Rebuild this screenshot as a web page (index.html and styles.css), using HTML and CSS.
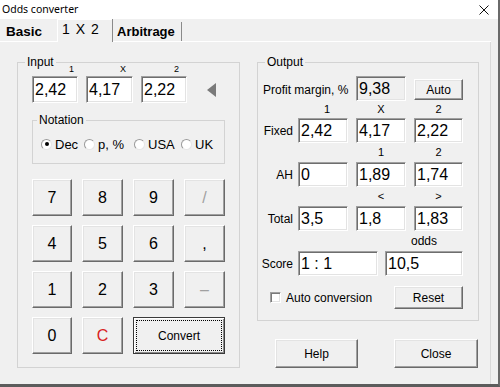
FILE: index.html
```html
<!DOCTYPE html>
<html lang="en">
<head>
<meta charset="utf-8">
<title>Odds converter</title>
<link rel="stylesheet" href="styles.css">
</head>
<body>
<div class="window">
  <div class="titlebar">
    <span class="title">Odds converter</span>
    <svg class="close-x" width="10" height="10" viewBox="0 0 10 10"><path d="M0.5 0.5 L9.5 9.5 M9.5 0.5 L0.5 9.5" stroke="#111" stroke-width="1" fill="none"/></svg>
  </div>
  <div class="tabs">
    <div class="tab tab-basic">Basic</div>
    <div class="tab tab-active">1 X 2</div>
    <div class="tab tab-arb">Arbitrage</div>
  </div>
  <div class="page">
    <div class="group input-group">
      <span class="legend">Input</span>
      <div class="odds-heads"><span>1</span><span>X</span><span>2</span></div>
      <div class="odds-row">
        <div class="edit big">2,42</div>
        <div class="edit big">4,17</div>
        <div class="edit big">2,22</div>
        <svg class="arrow" width="9" height="14" viewBox="0 0 9 14"><polygon points="9,0 9,14 0,7" fill="#7a7a7a"/></svg>
      </div>
      <div class="group notation">
        <span class="legend legend-notation">Notation</span>
        <div class="radios">
          <div class="radio-item ri-dec"><span class="radio checked"></span><span>Dec</span></div>
          <div class="radio-item ri-p"><span class="radio"></span><span>p, %</span></div>
          <div class="radio-item ri-usa"><span class="radio"></span><span>USA</span></div>
          <div class="radio-item ri-uk"><span class="radio"></span><span>UK</span></div>
        </div>
      </div>
      <div class="keypad">
        <div class="btn key">7</div>
        <div class="btn key">8</div>
        <div class="btn key">9</div>
        <div class="btn key disabled">/</div>
        <div class="btn key">4</div>
        <div class="btn key">5</div>
        <div class="btn key">6</div>
        <div class="btn key">,</div>
        <div class="btn key">1</div>
        <div class="btn key">2</div>
        <div class="btn key">3</div>
        <div class="btn key disabled">–</div>
        <div class="btn key">0</div>
        <div class="btn key key-c">C</div>
        <div class="btn convert">Convert</div>
      </div>
    </div>
    <div class="right-col">
      <div class="group output-group">
        <span class="legend">Output</span>
        <div class="out-grid">
          <div class="lbl profit-lbl">Profit margin, %</div>
          <div class="edit readonly c3">9,38</div>
          <div class="btn auto">Auto</div>

          <div class="head h-c2 h-first">1</div>
          <div class="head h-c3">X</div>
          <div class="head h-c4">2</div>

          <div class="lbl row-lbl">Fixed</div>
          <div class="edit c2">2,42</div>
          <div class="edit c3">4,17</div>
          <div class="edit c4">2,22</div>

          <div class="head h-c3">1</div>
          <div class="head h-c4">2</div>

          <div class="lbl row-lbl">AH</div>
          <div class="edit c2">0</div>
          <div class="edit c3">1,89</div>
          <div class="edit c4">1,74</div>

          <div class="head h-c3">&lt;</div>
          <div class="head h-c4">&gt;</div>

          <div class="lbl row-lbl">Total</div>
          <div class="edit c2">3,5</div>
          <div class="edit c3">1,8</div>
          <div class="edit c4">1,83</div>

          <div class="head h-odds">odds</div>

          <div class="lbl row-lbl">Score</div>
          <div class="score-pair">
            <div class="edit score">1 : 1</div>
            <div class="edit odds">10,5</div>
          </div>
        </div>
        <div class="auto-row">
          <label class="check-wrap"><span class="check"></span><span>Auto conversion</span></label>
          <div class="btn reset">Reset</div>
        </div>
      </div>
      <div class="bottom-buttons">
        <div class="btn big-btn">Help</div>
        <div class="btn big-btn close-btn">Close</div>
      </div>
    </div>
  </div>
</div>
</body>
</html>
```
FILE: styles.css
```css
* { box-sizing: border-box; margin: 0; padding: 0; }
html, body { width: 500px; height: 387px; overflow: hidden; }
body {
  background: #f0f0f0;
  font-family: "Liberation Sans", Arial, sans-serif;
  color: #000;
}
.window {
  width: 500px;
  height: 387px;
  display: flex;
  flex-direction: column;
  border-right: 2px solid #6a6a6a;
  border-bottom: 3px solid #5c5c5c;
}
.titlebar {
  height: 19px;
  flex: none;
  background: #fff;
  display: flex;
  align-items: center;
  justify-content: space-between;
  padding-left: 2px;
  padding-right: 9px;
}
.title {
  font-family: "Noto Sans", sans-serif;
  font-size: 10.5px;
  line-height: 19px;
  color: #000;
}
.close-x { display: block; }

.tabs {
  height: 23px;
  flex: none;
  display: flex;
  align-items: flex-end;
  box-shadow: inset 0 -1px 0 #fff;
  width: 491px;
}
.tab {
  height: 20px;
  line-height: 20px;
  font-size: 13.5px;
  white-space: nowrap;
}
.tab-basic {
  width: 57px;
  padding-left: 6px;
  font-weight: bold;
}
.tab-active {
  width: 56px;
  height: 23px;
  padding-left: 5px;
  padding-bottom: 3px;
  font-size: 14px;
  word-spacing: 2px;
  background: #f0f0f0;
  border-right: 1px solid #8a8a8a;
  box-shadow: inset 1px 1px 0 #fff;
}
.tab-arb {
  width: 69px;
  padding-left: 4px;
  font-size: 13px;
  font-weight: bold;
  border-right: 1px solid #8a8a8a;
  height: 19px;
  margin-bottom: 1px;
}

.page {
  flex: 1;
  width: 491px;
  border-right: 1px solid #dadada;
  display: flex;
  align-items: flex-start;
  padding: 20px 0 0 17px;
}

.group {
  position: relative;
  border: 1px solid #d3d3d3;
}
.legend {
  position: absolute;
  top: -8px;
  left: 7px;
  padding: 0 2px;
  background: #f0f0f0;
  font-size: 12px;
  line-height: 14px;
  white-space: nowrap;
}
.legend-notation { left: 4px; }

/* Input group */
.input-group {
  width: 223px;
  height: 306px;
  padding-left: 14px;
  flex: none;
}
.odds-heads {
  height: 13px;
  display: grid;
  grid-template-columns: 46px 47px 46px;
  column-gap: 8px;
  font-size: 9px;
  line-height: 13px;
  text-align: right;
}
.odds-heads span:nth-child(1) { padding-right: 4px; }
.odds-heads span:nth-child(2) { padding-right: 7px; }
.odds-heads span:nth-child(3) { padding-right: 8px; }
.odds-row {
  display: grid;
  grid-template-columns: 46px 47px 46px 9px;
  column-gap: 8px;
  align-items: center;
}
.odds-row .arrow { margin-left: 12px; display: block; }

.edit {
  height: 25px;
  background: #fff;
  border: 1px solid;
  border-color: #a0a0a0 #fff #fff #a0a0a0;
  box-shadow: inset 1px 1px 0 #6e6e6e, inset -1px -1px 0 #e3e3e3;
  font-size: 16px;
  line-height: 1;
  padding-left: 2px;
  display: flex;
  align-items: center;
  white-space: nowrap;
  overflow: hidden;
}
.edit.big { height: 27px; }
.edit.readonly { background: #f0f0f0; }

.notation {
  margin-top: 17px;
  width: 193px;
  height: 44px;
  padding: 16px 0 0 8px;
}
.radios {
  display: flex;
  align-items: center;
  height: 14px;
  font-size: 13px;
}
.radio-item {
  display: flex;
  align-items: center;
  gap: 3px;
  flex: none;
}
.ri-dec { width: 43px; }
.ri-p { width: 50px; }
.ri-usa { width: 47px; }
.radio {
  width: 11px;
  height: 11px;
  border-radius: 50%;
  background: #fff;
  border: 1px solid;
  border-color: #9a9a9a #e6e6e6 #e6e6e6 #9a9a9a;
  position: relative;
  flex: none;
}
.radio.checked::after {
  content: "";
  position: absolute;
  left: 2.5px;
  top: 2.5px;
  width: 4px;
  height: 4px;
  border-radius: 50%;
  background: #000;
}

.keypad {
  margin-top: 15px;
  display: grid;
  grid-template-columns: 40px 41px 41px 41px;
  grid-auto-rows: 37px;
  column-gap: 10px;
  row-gap: 9px;
}

.btn {
  background: #f0f0f0;
  border: 1px solid;
  border-color: #fff #6a6a6a #6a6a6a #fff;
  box-shadow: inset -1px -1px 0 #a0a0a0, inset 1px 1px 0 #e3e3e3;
  display: flex;
  align-items: center;
  justify-content: center;
  font-size: 12px;
  white-space: nowrap;
}
.key { font-size: 16px; }
.key.disabled { color: #a0a0a0; }
.key-c { color: #d82222; }
.convert {
  grid-column: 3 / 5;
  border-color: #3a3a3a;
  box-shadow: inset 1px 1px 0 #fff, inset -1px -1px 0 #8a8a8a;
  outline: 1px dotted #000;
  outline-offset: -4px;
}

/* Right column */
.right-col {
  margin-left: 17px;
  width: 222px;
  flex: none;
}
.output-group {
  width: 222px;
  height: 259px;
}
.out-grid {
  margin-top: 13px;
  display: grid;
  grid-template-columns: 40px 58px 58px 49px;
  grid-template-rows: 25px 17px 25px 19px 25px 19px 25px 20px 25px;
}
.c2 { grid-column: 2; width: 50px; }
.c3 { grid-column: 3; width: 50px; }
.c4 { grid-column: 4; width: 49px; }
.lbl {
  font-size: 12px;
  display: flex;
  align-items: center;
  white-space: nowrap;
}
.profit-lbl {
  grid-column: 1 / 3;
  padding-left: 5px;
  padding-top: 2px;
}
.row-lbl {
  grid-column: 1;
  justify-content: flex-end;
  padding-right: 5px;
}
.auto {
  grid-column: 4;
  height: 21px;
  align-self: start;
  margin-top: 3px;
}
.head {
  font-size: 11px;
  line-height: 11px;
  text-align: center;
  align-self: center;
  width: 50px;
}
.h-c2 { grid-column: 2; }
.h-c3 { grid-column: 3; }
.h-c4 { grid-column: 4; width: 49px; }
.h-first { padding-left: 8px; }
.h-odds {
  grid-column: 2 / 5;
  width: auto;
  padding-left: 87px;
  font-size: 12px;
  line-height: 12px;
}
.score-pair {
  grid-column: 2 / 5;
  display: flex;
  gap: 7px;
}
.edit.score { width: 80px; }
.edit.odds { flex: 1; }

.auto-row {
  margin-top: 10px;
  width: 205px;
  display: flex;
  align-items: center;
  justify-content: space-between;
  padding-left: 12px;
}
.check-wrap {
  display: flex;
  align-items: center;
  gap: 5px;
  font-size: 12px;
}
.check {
  width: 11px;
  height: 11px;
  background: #fff;
  border: 1px solid;
  border-color: #a0a0a0 #fff #fff #a0a0a0;
  box-shadow: inset 1px 1px 0 #7a7a7a, inset -1px -1px 0 #e3e3e3;
}
.reset {
  width: 69px;
  height: 23px;
}
.bottom-buttons {
  margin-top: 18px;
  padding-left: 18px;
  display: flex;
}
.big-btn {
  width: 83px;
  height: 29px;
}
.close-btn {
  width: 84px;
  margin-left: 36px;
}
```
